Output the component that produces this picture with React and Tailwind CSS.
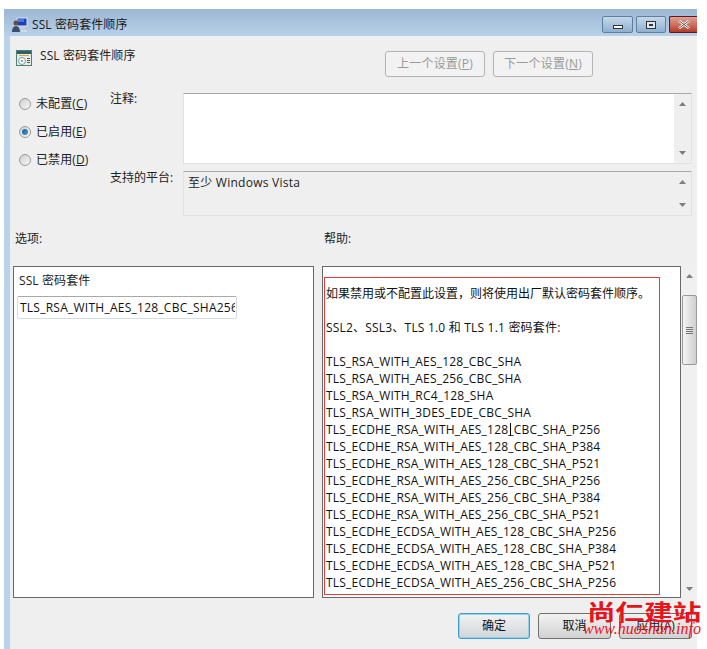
const FONT = '"Open Sans","Noto Sans CJK SC",sans-serif';

const LINES = [
  "TLS_RSA_WITH_AES_128_CBC_SHA",
  "TLS_RSA_WITH_AES_256_CBC_SHA",
  "TLS_RSA_WITH_RC4_128_SHA",
  "TLS_RSA_WITH_3DES_EDE_CBC_SHA",
  "TLS_ECDHE_RSA_WITH_AES_128_CBC_SHA_P256",
  "TLS_ECDHE_RSA_WITH_AES_128_CBC_SHA_P384",
  "TLS_ECDHE_RSA_WITH_AES_128_CBC_SHA_P521",
  "TLS_ECDHE_RSA_WITH_AES_256_CBC_SHA_P256",
  "TLS_ECDHE_RSA_WITH_AES_256_CBC_SHA_P384",
  "TLS_ECDHE_RSA_WITH_AES_256_CBC_SHA_P521",
  "TLS_ECDHE_ECDSA_WITH_AES_128_CBC_SHA_P256",
  "TLS_ECDHE_ECDSA_WITH_AES_128_CBC_SHA_P384",
  "TLS_ECDHE_ECDSA_WITH_AES_128_CBC_SHA_P521",
  "TLS_ECDHE_ECDSA_WITH_AES_256_CBC_SHA_P256",
];

function Radio({ label, hot, checked }) {
  return (
    <div className="flex items-center h-[12px] gap-[5px]">
      <span className="w-[12px] h-[12px] rounded-full border border-[#9a9a9a] bg-gradient-to-br from-[#d0d0d0] to-[#f8f8f8] flex items-center justify-center shrink-0">
        {checked && <span className="w-[6px] h-[6px] rounded-full bg-gradient-to-br from-[#1c5a8e] to-[#3f9fd8]" />}
      </span>
      <span className="text-[12px] text-[#222] whitespace-nowrap tracking-[0.1px]">
        {label}(<span className="underline">{hot}</span>)
      </span>
    </div>
  );
}

function Up({ className = "" }) {
  return <svg width="7" height="4" viewBox="0 0 7 4" className={className}><path d="M3.5 0L7 4H0z" fill="#7d7d7d" /></svg>;
}
function Down({ className = "" }) {
  return <svg width="7" height="4" viewBox="0 0 7 4" className={className}><path d="M0 0h7L3.5 4z" fill="#7d7d7d" /></svg>;
}

function MiniScroll() {
  return (
    <div className="w-[17px] h-full bg-[#efefef] flex flex-col items-center justify-between py-[8px] shrink-0">
      <Up />
      <Down />
    </div>
  );
}

function NavButton({ label, hot, w }) {
  return (
    <div className={`${w} h-[26px] rounded-[3px] border border-[#b4b4b4] bg-[#f2f2f2] flex items-center justify-center text-[12px] text-[#9a9a9a] tracking-[0.2px]`}>
      {label}(<span className="underline">{hot}</span>)
    </div>
  );
}

function TitleIcon() {
  return (
    <svg width="16" height="16" viewBox="0 0 16 16" className="shrink-0">
      <rect x="5" y="1" width="10" height="8" fill="#1f3fb8" stroke="#dfe6f0" strokeWidth="1" />
      <rect x="6" y="2" width="6" height="3" fill="#3f7be0" />
      <rect x="7" y="10" width="6" height="2" fill="#c8ccd2" />
      <circle cx="4" cy="6" r="2.5" fill="#6b4a36" />
      <path d="M0 15c0-4 1.500-6 4-6s4 2 4 6z" fill="#38506e" />
      <rect x="9" y="13" width="6" height="2" fill="#d6dbe2" />
    </svg>
  );
}

function PolicyIcon() {
  return (
    <svg width="16" height="16" viewBox="0 0 16 16" className="shrink-0">
      <rect x="0" y="0" width="16" height="16" fill="#4f7f78" />
      <rect x="1" y="1" width="14" height="3" fill="#2f5f68" />
      <rect x="1" y="4" width="14" height="11" fill="#e8eee4" />
      <rect x="3" y="5" width="10" height="1" fill="#d8a83a" />
      <circle cx="6" cy="11" r="3.500" fill="#f5f5f5" stroke="#8a9aa0" strokeWidth="1" />
      <circle cx="6" cy="11" r="1" fill="#7a8a90" />
      <rect x="11" y="8" width="3" height="1" fill="#4a5a5a" />
      <rect x="11" y="10" width="3" height="1" fill="#4a5a5a" />
      <rect x="11" y="12" width="3" height="1" fill="#4a5a5a" />
    </svg>
  );
}

function WinBtn({ w, cls, children }) {
  return (
    <div className={`${w} h-[17px] rounded-[2px] border flex items-center justify-center ${cls}`}>{children}</div>
  );
}

export default function App() {
  return (
    <div className="w-[707px] h-[649px] bg-white pt-[9px] pl-[4px] overflow-hidden relative" style={{ fontFamily: FONT }}>
      <div className="w-[693px] h-[640px] flex flex-col">
        <div className="h-[27px] shrink-0 bg-gradient-to-b from-[#9cb7d3] to-[#b8d1ea] flex items-start pl-[8px]">
          <div className="mt-[8px]"><TitleIcon /></div>
          <span className="ml-[4px] mt-[7px] text-[12px] leading-[17px] text-[#1a1a1a] whitespace-nowrap tracking-[0.1px]">SSL 密码套件顺序</span>
          <div className="ml-auto flex gap-[3px] mt-[7px]">
            <WinBtn w="w-[31px]" cls="border-[#5f7f9f] bg-gradient-to-b from-[#c5d8ea] to-[#8fb0d0]">
              <span className="w-[10px] h-[4px] mt-[5px] border border-[#333] bg-white" />
            </WinBtn>
            <WinBtn w="w-[30px]" cls="border-[#5f7f9f] bg-gradient-to-b from-[#c5d8ea] to-[#8fb0d0]">
              <span className="w-[10px] h-[8px] border border-[#333] bg-[#dfe8f0] flex items-center justify-center">
                <span className="w-[4px] h-[2px] bg-[#333]" />
              </span>
            </WinBtn>
            <WinBtn w="w-[28px] rounded-r-none border-r-0" cls="border-[#5a1a20] bg-gradient-to-b from-[#e0a090] to-[#b53a28]">
              <svg width="12" height="9" viewBox="0 0 12 9"><path d="M1 0.800L11 8.200M11 0.800L1 8.200" stroke="#fff" strokeWidth="2.500" /><path d="M1 0.800L11 8.200M11 0.800L1 8.200" stroke="#555" strokeWidth="1" /></svg>
            </WinBtn>
          </div>
        </div>

        <div className="flex-1 flex min-h-0">
          <div className="w-[6px] shrink-0 bg-[#b9d3ec]" />
          <div className="flex-1 bg-[#efefef] flex flex-col min-w-0">
            <div className="flex items-start h-[41px] shrink-0">
              <div className="ml-[6px] mt-[14px]"><PolicyIcon /></div>
              <span className="ml-[8px] mt-[11px] text-[12px] leading-[17px] text-[#222] whitespace-nowrap tracking-[0.1px]">SSL 密码套件顺序</span>
              <div className="ml-auto mr-[104px] mt-[15px] flex gap-[8px]">
                <NavButton label="上一个设置" hot="P" w="w-[100px]" />
                <NavButton label="下一个设置" hot="N" w="w-[100px]" />
              </div>
            </div>

            <div className="flex mt-[16px] shrink-0">
              <div className="w-[100px] pl-[9px] pt-[5px] flex flex-col gap-[16px]">
                <Radio label="未配置" hot="C" />
                <Radio label="已启用" hot="E" checked />
                <Radio label="已禁用" hot="D" />
              </div>
              <div className="w-[73px] text-[12px] leading-[17px] text-[#222]">
                <div className="-mt-[3px]">注释:</div>
                <div className="mt-[62px]">支持的平台:</div>
              </div>
              <div className="w-[509px] flex flex-col gap-[7px]">
                <div className="h-[71px] bg-white border border-[#dfe3e8] border-t-[#a9a9a9] flex justify-end">
                  <MiniScroll />
                </div>
                <div className="h-[45px] bg-[#efefef] border border-[#dfe3e8] border-t-[#a9a9a9] flex">
                  <div className="flex-1 pl-[4px] pt-[2px] text-[12px] leading-[17px] text-[#222] tracking-[0.25px]">至少 Windows Vista</div>
                  <MiniScroll />
                </div>
              </div>
            </div>

            <div className="flex h-[50px] shrink-0 text-[12px] leading-[17px] text-[#222]">
              <div className="w-[314px] pl-[5px] pt-[14px]">选项:</div>
              <div className="pt-[14px]">帮助:</div>
            </div>

            <div className="flex h-[332px] shrink-0 ml-[3px]">
              <div className="w-[301px] bg-white border border-[#696969] pl-[3px]">
                <div className="pl-[2px] pt-[5px] text-[12px] leading-[17px] text-[#222] tracking-[0.1px]">SSL 密码套件</div>
                <div className="mt-[7px] w-[220px] h-[23px] border border-[#d5dbe3] border-t-[#a9a9a9] rounded-[2px] pl-[2px] text-[12px] leading-[21px] text-[#111]">
                  <div className="w-[215px] overflow-hidden whitespace-nowrap tracking-[0.25px]">TLS_RSA_WITH_AES_128_CBC_SHA256</div>
                </div>
              </div>
              <div className="ml-[8px] w-[359px] bg-white border border-[#696969] pl-[1px] pt-[10px]">
                <div className="w-[336px] h-[318px] border border-[#e33b3b] pl-[1px] pt-[7px] text-[12px] leading-[17px] text-[#111] whitespace-nowrap relative">
                  <div>如果禁用或不配置此设置，则将使用出厂默认密码套件顺序。</div>
                  <div className="h-[17px]" />
                  <div className="tracking-[0.2px]">SSL2、SSL3、TLS 1.0 和 TLS 1.1 密码套件:</div>
                  <div className="h-[17px]" />
                  <div className="tracking-[0.2px]">
                    {LINES.map((l) => <div key={l}>{l}</div>)}
                  </div>
                  <span className="absolute left-[185px] top-[145px] w-[1px] h-[13px] bg-black" />
                </div>
              </div>
              <div className="w-[16px] bg-[#f0f0f0] flex flex-col items-center relative">
                <Up className="mt-[8px]" />
                <div className="mt-[17px] w-[15px] h-[70px] rounded-[2px] border border-[#9a9a9a] bg-gradient-to-r from-[#f4f4f4] to-[#cfcfcf] flex flex-col items-center justify-center gap-[1px]">
                  <span className="w-[7px] h-[1px] bg-[#777]" />
                  <span className="w-[7px] h-[1px] bg-[#777]" />
                  <span className="w-[7px] h-[1px] bg-[#777]" />
                  <span className="w-[7px] h-[1px] bg-[#777]" />
                </div>
                <Down className="mt-auto mb-[7px]" />
              </div>
            </div>

            <div className="flex justify-end gap-[8px] mt-[15px] mr-[5px] shrink-0">
              <div className="w-[72px] h-[26px] rounded-[3px] border border-[#3c9ccc] bg-gradient-to-b from-[#f2f2f2] to-[#d2d6da] flex items-center justify-center text-[12px] text-[#111] shadow-[inset_0_0_0_1px_#8ed4f0]">确定</div>
              <div className="w-[73px] h-[26px] rounded-[3px] border border-[#707070] bg-gradient-to-b from-[#f2f2f2] to-[#d2d2d2] flex items-center justify-center text-[12px] text-[#111]">取消</div>
              <div className="w-[73px] h-[26px] rounded-[3px] border border-[#707070] bg-gradient-to-b from-[#f2f2f2] to-[#d2d2d2] flex items-center justify-center text-[12px] text-[#111]">应用(A)</div>
            </div>
          </div>
        </div>
      </div>

      <div className="absolute left-[587px] top-[598px] text-[22px] leading-[24px] font-bold text-[#e8141c] whitespace-nowrap origin-left scale-x-[1.3]" style={{ fontFamily: '"Noto Sans CJK SC",sans-serif' }}>尚仁建站</div>
      <div className="absolute left-[583px] top-[620px] text-[16px] leading-[18px] italic text-[#e8141c] whitespace-nowrap" style={{ fontFamily: '"Liberation Serif",serif' }}>www.huoshan.info</div>
    </div>
  );
}
